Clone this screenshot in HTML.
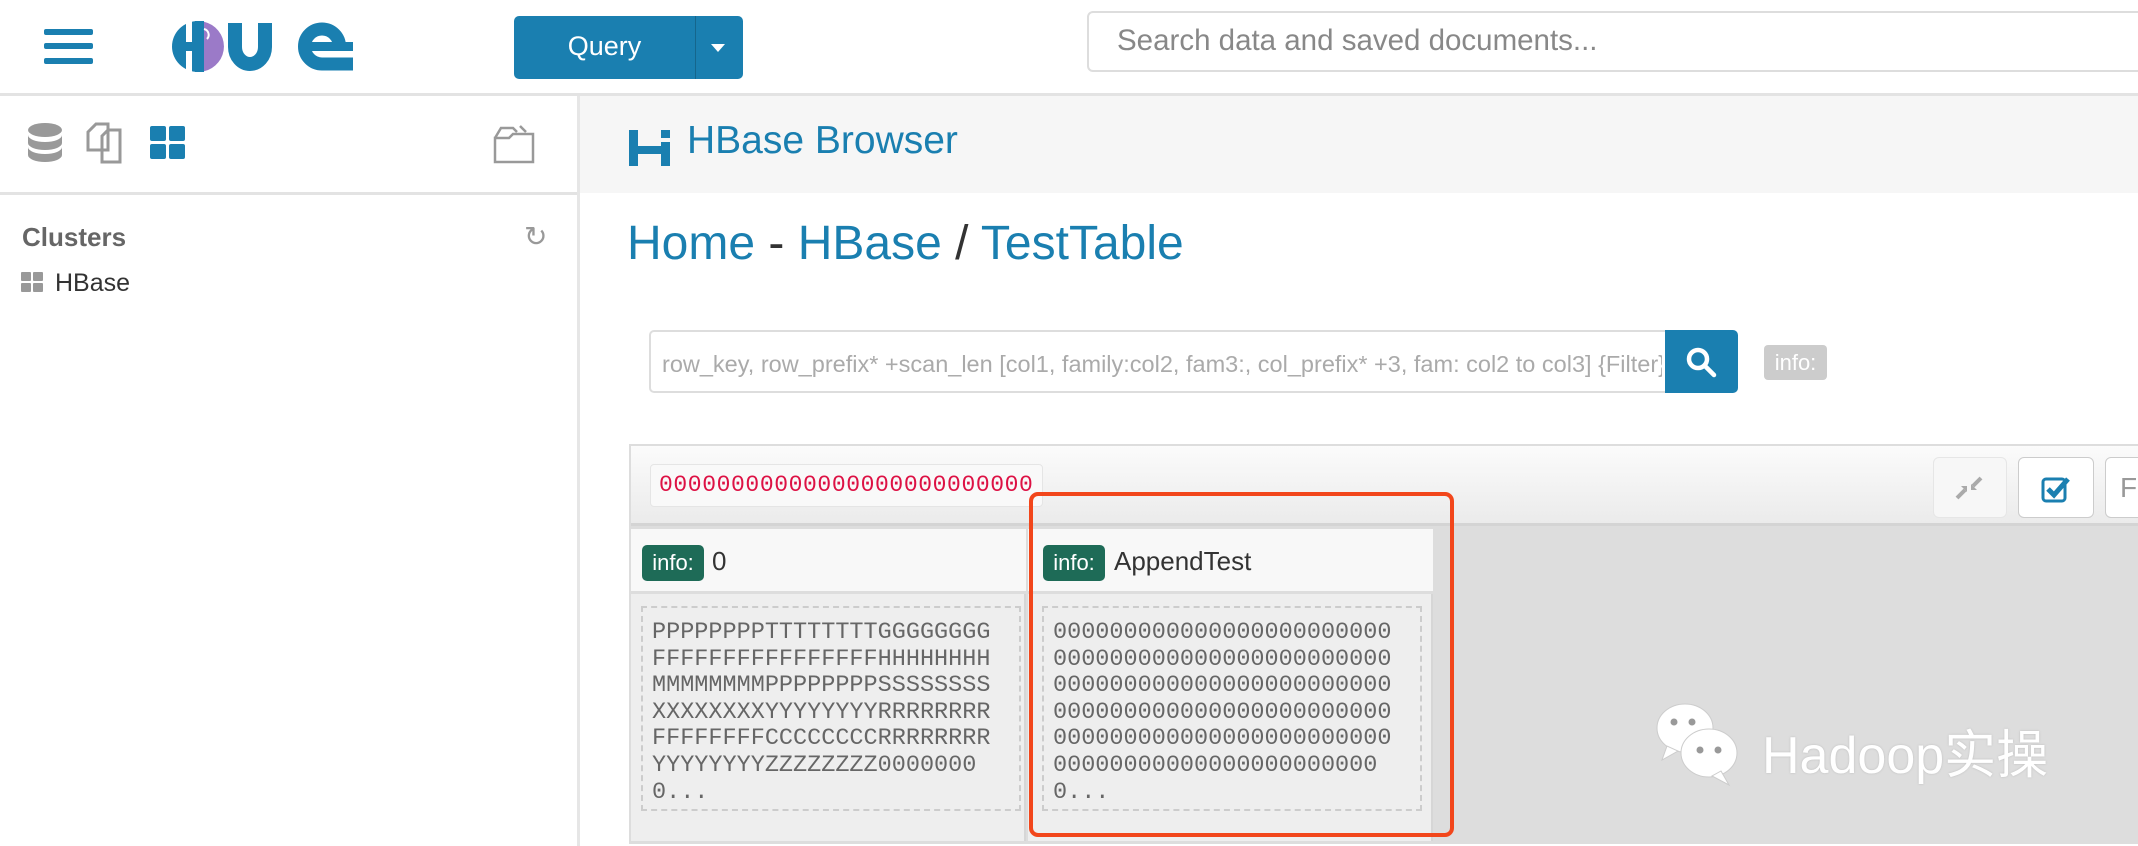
<!DOCTYPE html>
<html><head><meta charset="utf-8"><style>
*{box-sizing:border-box;margin:0;padding:0}
body{width:2138px;height:846px;overflow:hidden;background:#fff;font-family:"Liberation Sans","Noto Sans CJK SC",sans-serif;position:relative}
.a{position:absolute}
.mono{font-family:"Liberation Mono",monospace}
</style></head><body>
<!-- header -->
<div class="a" style="left:0;top:0;width:2138px;height:96px;border-bottom:3px solid #e3e3e3"></div>
<div class="a" style="left:44px;top:29px;width:49px;height:6px;background:#1a7fb0;border-radius:2px"></div>
<div class="a" style="left:44px;top:43px;width:49px;height:6px;background:#1a7fb0;border-radius:2px"></div>
<div class="a" style="left:44px;top:58px;width:49px;height:6px;background:#1a7fb0;border-radius:2px"></div>
<svg class="a" style="left:164px;top:19px" width="196" height="54" viewBox="0 0 196 54">
<path d="M34 2 A26 25.5 0 0 0 34 53 Z" fill="#1a7fb0"/>
<rect x="22" y="2" width="6" height="51" fill="#fff"/>
<rect x="18" y="23" width="17" height="9" fill="#1a7fb0"/>
<rect x="31" y="2" width="9" height="51" fill="#1a7fb0"/>
<path d="M40 2.7 A26 25.5 0 0 1 40 52.3 Z" fill="#9b7ac8"/>
<path d="M40 10 a6 6 0 0 1 3 10" fill="none" stroke="#fff" stroke-width="2"/>
<path d="M71 4 v24 a15 17 0 0 0 30 0 v-24" fill="none" stroke="#1a7fb0" stroke-width="14"/>
<path d="M189 45 H158 A17.5 17.5 0 0 1 158 10 A17.5 17.5 0 0 1 175.5 27.5" fill="none" stroke="#1a7fb0" stroke-width="13"/>
<rect x="140" y="23" width="49" height="9" fill="#1a7fb0"/>
</svg>
<div class="a" style="left:514px;top:16px;width:229px;height:63px;background:#1a7fb0;border-radius:5px"></div>
<div class="a" style="left:695px;top:16px;width:1px;height:63px;background:#15668c"></div>
<div class="a" style="left:514px;top:31px;width:181px;text-align:center;color:#fff;font-size:27px">Query</div>
<div class="a" style="left:711px;top:44px;width:0;height:0;border-left:7px solid transparent;border-right:7px solid transparent;border-top:8px solid #fff"></div>
<div class="a" style="left:1087px;top:11px;width:1080px;height:61px;border:2px solid #ddd;border-radius:6px"></div>
<div class="a" style="left:1117px;top:24px;color:#888;font-size:29.5px">Search data and saved documents...</div>
<!-- sidebar -->
<div class="a" style="left:577px;top:96px;width:3px;height:750px;background:#e6e6e6"></div>
<div class="a" style="left:0;top:192px;width:577px;height:3px;background:#e3e3e3"></div>
<svg class="a" style="left:26px;top:122px" width="40" height="42"><ellipse cx="19" cy="8" rx="17" ry="7" fill="#999"/><path d="M2 13 a17 7 0 0 0 34 0 v8 a17 7 0 0 1 -34 0z M2 25 a17 7 0 0 0 34 0 v8 a17 7 0 0 1 -34 0z" fill="#999"/></svg>
<svg class="a" style="left:86px;top:122px" width="44" height="44" fill="none" stroke="#999" stroke-width="3"><path d="M2 10 l8 -8 h12 v26 h-20z M16 14 l6 -6 h12 v32 h-18z"/></svg>
<svg class="a" style="left:150px;top:126px" width="38" height="34" fill="#1a7fb0"><rect x="0" y="0" width="16" height="15" rx="2"/><rect x="19" y="0" width="16" height="15" rx="2"/><rect x="0" y="18" width="16" height="15" rx="2"/><rect x="19" y="18" width="16" height="15" rx="2"/></svg>
<svg class="a" style="left:492px;top:124px" width="46" height="42" fill="none" stroke="#999" stroke-width="2.5"><path d="M3 14 h14 l4 -4 h20 v28 h-38z M3 14 l6 -10 h12 l4 4 M28 2 l6 6"/></svg>
<div class="a" style="left:22px;top:222px;color:#666;font-size:26px;font-weight:bold">Clusters</div>
<div class="a" style="left:524px;top:220px;color:#999;font-size:28px">↻</div>
<svg class="a" style="left:21px;top:272px" width="24" height="22" fill="#999"><rect x="0" y="0" width="10" height="9" rx="1"/><rect x="12" y="0" width="10" height="9" rx="1"/><rect x="0" y="11" width="10" height="9" rx="1"/><rect x="12" y="11" width="10" height="9" rx="1"/></svg>
<div class="a" style="left:55px;top:269px;color:#333;font-size:25px">HBase</div>
<!-- main -->
<div class="a" style="left:580px;top:96px;width:1558px;height:97px;background:#f6f6f6"></div>
<svg class="a" style="left:629px;top:128px" width="46" height="38" fill="#1a7fb0"><rect x="0" y="2" width="9" height="36"/><rect x="0" y="18" width="40" height="8"/><rect x="32" y="14" width="9" height="24"/><rect x="32" y="2" width="9" height="8"/></svg>
<div class="a" style="left:687px;top:119px;color:#1a7fb0;font-size:39px">HBase Browser</div>
<div class="a" style="left:627px;top:216px;font-size:48px;color:#1a7fb0;white-space:nowrap">Home <span style="color:#333">-</span> HBase <span style="color:#333">/</span> TestTable</div>
<div class="a" style="left:649px;top:330px;width:1018px;height:63px;border:2px solid #ddd;border-radius:5px 0 0 5px"></div>
<div class="a" style="left:662px;top:351px;color:#aaa;font-size:23.5px;white-space:nowrap;width:1000px;overflow:hidden">row_key, row_prefix* +scan_len [col1, family:col2, fam3:, col_prefix* +3, fam: col2 to col3] {Filter}</div>
<div class="a" style="left:1665px;top:330px;width:73px;height:63px;background:#1a7fb0;border-radius:0 5px 5px 0"></div>
<svg class="a" style="left:1686px;top:347px" width="32" height="32" fill="none" stroke="#fff" stroke-width="4.5"><circle cx="12" cy="12" r="9"/><path d="M19 19 l9 9" stroke-linecap="round"/></svg>
<div class="a" style="left:1764px;top:345px;width:63px;height:35px;background:#ccc;border-radius:4px;color:#fff;font-size:22px;text-align:center;line-height:35px">info:</div>
<!-- table -->
<div class="a" style="left:629px;top:444px;width:1509px;height:400px;border:2px solid #ddd;border-right:none;background:#ddd"></div>
<div class="a" style="left:631px;top:446px;width:1507px;height:80px;background:linear-gradient(#fbfbfb,#ebebeb);border-bottom:3px solid #d4d4d4"></div>
<div class="a mono" style="left:650px;top:464px;width:393px;height:43px;background:#f9f9f9;border:1px solid #e5e5e5;border-radius:4px;color:#dd1144;font-size:23px;line-height:41px;padding-left:8px;letter-spacing:0.6px;white-space:nowrap;overflow:hidden">00000000000000000000000000</div>
<div class="a" style="left:1933px;top:457px;width:74px;height:61px;border:1px solid #e6e6e6;background:#f7f7f7;border-radius:6px"></div>
<svg class="a" style="left:1955px;top:476px" width="28" height="24" stroke="#aaa" stroke-width="4" fill="#aaa"><path d="M2 22 l8 -8 M26 2 l-8 8"/><path d="M6 10 l6 0 0 6z M22 14 l-6 0 0 -6z" stroke="none"/></svg>
<div class="a" style="left:2018px;top:457px;width:76px;height:61px;border:1px solid #ccc;background:#fff;border-radius:6px"></div>
<svg class="a" style="left:2041px;top:475px" width="30" height="28" fill="none"><rect x="2" y="4" width="22" height="22" rx="3" stroke="#1a7fb0" stroke-width="3"/><path d="M7 14 l6 6 l14 -16" stroke="#1a7fb0" stroke-width="5"/></svg>
<div class="a" style="left:2105px;top:457px;width:60px;height:61px;border:1px solid #ccc;background:#fff;border-radius:6px;color:#999;font-size:28px;padding:14px 0 0 14px">F</div>
<!-- cells -->
<div class="a" style="left:631px;top:529px;width:395px;height:312px;background:#eee;border-right:2px solid #d6d6d6"></div>
<div class="a" style="left:1028px;top:529px;width:405px;height:312px;background:#eee;border-right:2px solid #d6d6d6"></div>
<div class="a" style="left:631px;top:529px;width:395px;height:65px;background:#f8f8f8;border-bottom:3px solid #ddd"></div>
<div class="a" style="left:1028px;top:529px;width:405px;height:65px;background:#f8f8f8;border-bottom:3px solid #ddd"></div>
<div class="a" style="left:642px;top:545px;width:62px;height:36px;background:#1e6b57;border-radius:5px;color:#fff;font-size:22px;text-align:center;line-height:36px">info:</div>
<div class="a" style="left:712px;top:546px;color:#333;font-size:26px">0</div>
<div class="a" style="left:1043px;top:545px;width:62px;height:36px;background:#1e6b57;border-radius:5px;color:#fff;font-size:22px;text-align:center;line-height:36px">info:</div>
<div class="a" style="left:1114px;top:546px;color:#333;font-size:26px">AppendTest</div>
<div class="a mono" style="left:641px;top:606px;width:380px;height:205px;border:2px dashed #ccc;color:#666;font-size:23.5px;line-height:26.6px;padding:12px 0 0 9px;white-space:pre">PPPPPPPPTTTTTTTTGGGGGGGG
FFFFFFFFFFFFFFFFHHHHHHHH
MMMMMMMMPPPPPPPPSSSSSSSS
XXXXXXXXYYYYYYYYRRRRRRRR
FFFFFFFFCCCCCCCCRRRRRRRR
YYYYYYYYZZZZZZZZ0000000
0...</div>
<div class="a mono" style="left:1042px;top:606px;width:380px;height:205px;border:2px dashed #ccc;color:#666;font-size:23.5px;line-height:26.6px;padding:12px 0 0 9px;white-space:pre">000000000000000000000000
000000000000000000000000
000000000000000000000000
000000000000000000000000
000000000000000000000000
00000000000000000000000
0...</div>
<div class="a" style="left:1029px;top:492px;width:425px;height:345px;border:4px solid #f2461b;border-radius:9px"></div>
<!-- watermark -->
<svg class="a" style="left:1655px;top:698px" width="90" height="92" fill="#fff" stroke="#ccc" stroke-width="1"><ellipse cx="30" cy="30" rx="28" ry="24"/><path d="M12 48 l-5 14 l16 -9z"/><ellipse cx="54" cy="55" rx="28" ry="24"/><path d="M66 73 l8 14 l-17 -9z"/><circle cx="19" cy="24" r="3.5" fill="#999" stroke="none"/><circle cx="37" cy="24" r="3.5" fill="#999" stroke="none"/><circle cx="45" cy="52" r="3.5" fill="#999" stroke="none"/><circle cx="63" cy="52" r="3.5" fill="#999" stroke="none"/></svg>
<div class="a" style="left:1762px;top:713px;color:#fff;font-size:52px;white-space:nowrap;text-shadow:0 0 2px #bbb">Hadoop实操</div>
</body></html>
